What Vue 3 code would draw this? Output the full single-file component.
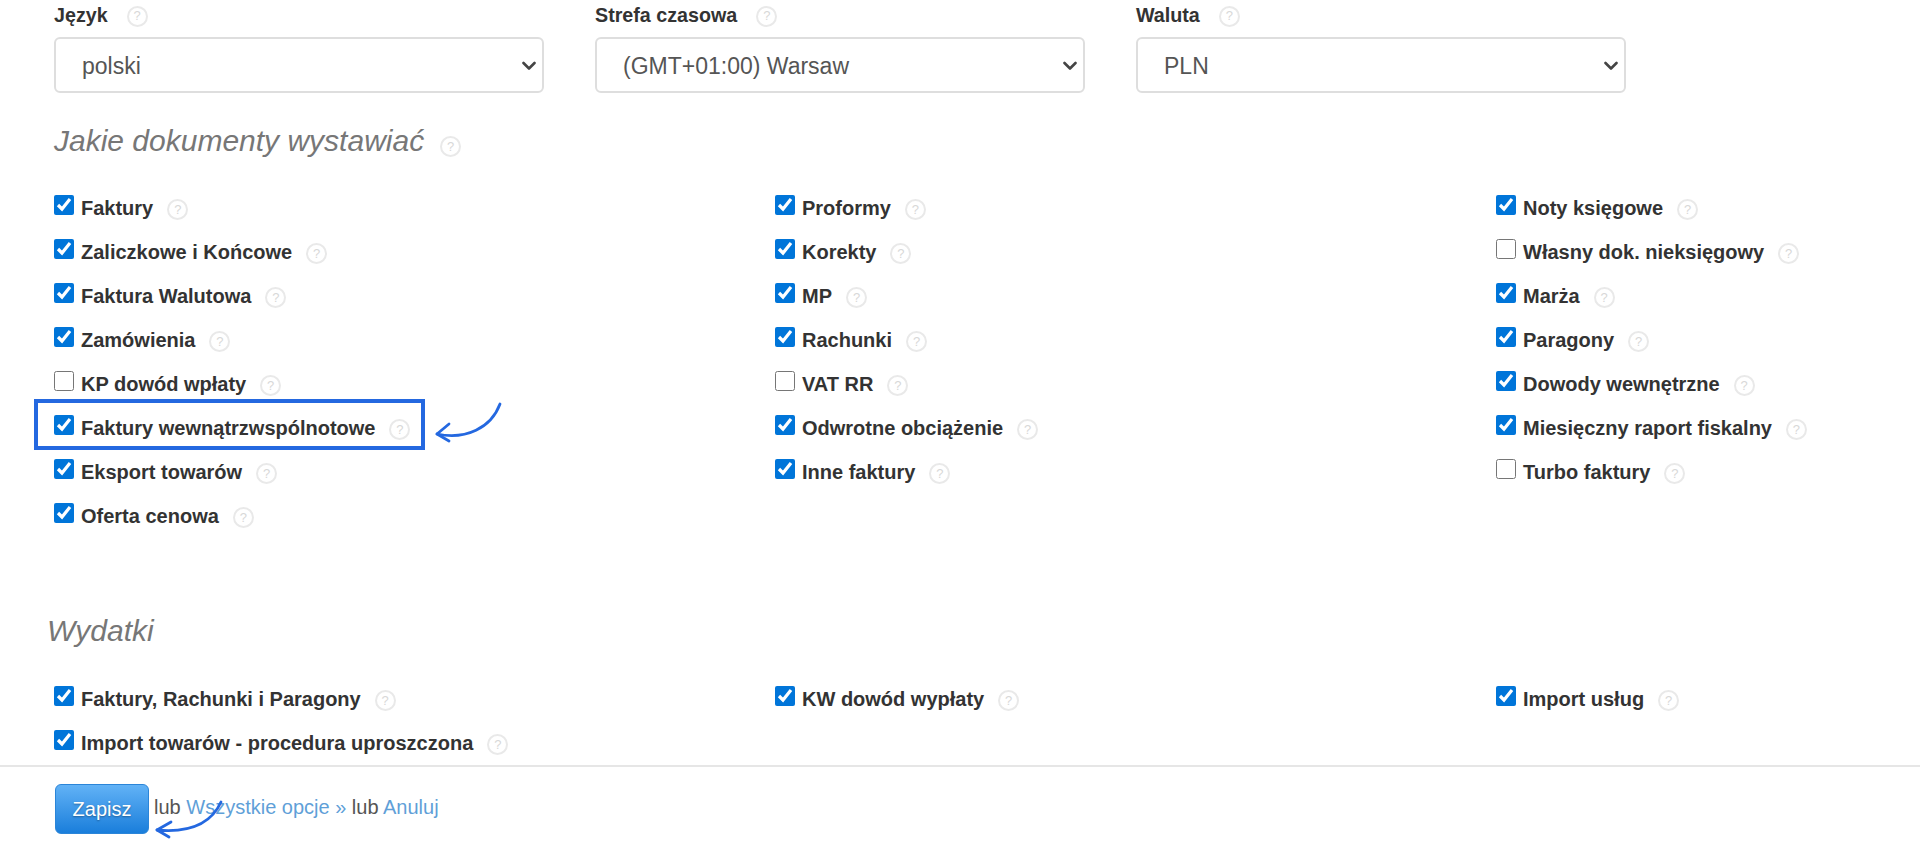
<script setup>
const selects = [
  { label: 'Język', value: 'polski' },
  { label: 'Strefa czasowa', value: '(GMT+01:00) Warsaw' },
  { label: 'Waluta', value: 'PLN' }
]
const docs = [
  [['Faktury', 1], ['Zaliczkowe i Końcowe', 1], ['Faktura Walutowa', 1], ['Zamówienia', 1], ['KP dowód wpłaty', 0], ['Faktury wewnątrzwspólnotowe', 1], ['Eksport towarów', 1], ['Oferta cenowa', 1]],
  [['Proformy', 1], ['Korekty', 1], ['MP', 1], ['Rachunki', 1], ['VAT RR', 0], ['Odwrotne obciążenie', 1], ['Inne faktury', 1]],
  [['Noty księgowe', 1], ['Własny dok. nieksięgowy', 0], ['Marża', 1], ['Paragony', 1], ['Dowody wewnętrzne', 1], ['Miesięczny raport fiskalny', 1], ['Turbo faktury', 0]]
]
const expenses = [
  [['Faktury, Rachunki i Paragony', 1], ['Import towarów - procedura uproszczona', 1]],
  [['KW dowód wypłaty', 1]],
  [['Import usług', 1]]
]
</script>

<template>
  <div class="page">
    <main class="content">
      <div class="selects">
        <div v-for="s in selects" :key="s.label" class="field">
          <div class="field-label">{{ s.label }}<span class="help">?</span></div>
          <div class="select-wrap">
            <select class="select">
              <option>{{ s.value }}</option>
            </select>
            <svg class="chevron" width="14" height="10" viewBox="0 0 14 10" fill="none" stroke="#444" stroke-width="2.6" stroke-linecap="round" stroke-linejoin="round">
              <path d="M1.5 2L7 7.5L12.5 2" />
            </svg>
          </div>
        </div>
      </div>

      <h2 class="heading">Jakie dokumenty wystawiać<span class="help">?</span></h2>
      <div class="columns">
        <div v-for="(col, i) in docs" :key="i" class="column">
          <label v-for="d in col" :key="d[0]" class="row">
            <input type="checkbox" class="check" :checked="!!d[1]" />
            <span class="row-text">{{ d[0] }}</span>
            <span class="help">?</span>
          </label>
        </div>
      </div>

      <h2 class="heading heading-exp">Wydatki</h2>
      <div class="columns columns-exp">
        <div v-for="(col, i) in expenses" :key="i" class="column">
          <label v-for="d in col" :key="d[0]" class="row">
            <input type="checkbox" class="check" :checked="!!d[1]" />
            <span class="row-text">{{ d[0] }}</span>
            <span class="help">?</span>
          </label>
        </div>
      </div>
    </main>

    <footer class="footer">
      <button class="save" type="button">Zapisz</button>
      <span class="actions">lub <a class="link">Wszystkie opcje »</a> lub <a class="link">Anuluj</a></span>
    </footer>

    <div class="highlight"></div>
    <svg class="arrows" width="1920" height="847" viewBox="0 0 1920 847" fill="none" stroke="#2468e0" stroke-width="2.8" stroke-linecap="round" stroke-linejoin="round">
      <path d="M500 404C491 428 466 440 437 434" />
      <path d="M449 424L437 434L449 441" />
      <path d="M221 802C211 824 190 833 157 830" />
      <path d="M171 822L157 830L169 837" />
    </svg>
  </div>
</template>

<style scoped>
.page {
  position: relative;
  height: 847px;
  width: 1920px;
  overflow: hidden;
  display: flex;
  flex-direction: column;
  background: #fff;
  font-family: "Liberation Sans", Arial, sans-serif;
  color: #333;
}
.content {
  flex: 1;
  min-height: 0;
  padding-left: 54px;
}
.selects {
  display: flex;
  gap: 51px;
}
.field {
  width: 490px;
}
.field-label {
  height: 37px;
  font-size: 19.7px;
  font-weight: 700;
  line-height: 30px;
  display: flex;
  align-items: center;
  padding-bottom: 8px;
  box-sizing: border-box;
}
.select-wrap {
  position: relative;
}
.select {
  display: block;
  width: 100%;
  height: 56px;
  box-sizing: border-box;
  padding: 2px 30px 0 26px;
  appearance: none;
  border: 2px solid #dedede;
  border-radius: 6px;
  background: #fff;
  font-family: inherit;
  font-size: 23px;
  color: #555;
}
.chevron {
  position: absolute;
  right: 8px;
  top: 24px;
  pointer-events: none;
}
.help {
  display: inline-flex;
  align-items: center;
  justify-content: center;
  width: 21px;
  height: 21px;
  margin-left: 14px;
  box-sizing: border-box;
  border: 2px solid #e9e9e9;
  border-radius: 50%;
  font-size: 13px;
  font-weight: 400;
  font-style: normal;
  color: #d8d8d8;
  flex: none;
  letter-spacing: 0;
}
.field-label .help {
  margin-left: 19px;
  margin-top: 3px;
}
.heading {
  margin: 28px 0 0;
  height: 40px;
  display: flex;
  align-items: center;
  font-size: 30px;
  font-weight: 400;
  font-style: italic;
  color: #777;
}
.heading .help {
  margin-top: 10px;
  margin-left: 16px;
}
.heading-exp {
  margin: 0 0 0 -7px;
  padding-top: 66px;
  height: 52px;
}
.columns {
  display: grid;
  grid-template-columns: 721px 721px 1fr;
  margin-top: 26px;
}
.columns-exp {
  margin-top: 21px;
}
.row {
  display: flex;
  align-items: center;
  height: 44px;
  font-size: 20px;
  font-weight: 700;
}
.check {
  width: 20px;
  height: 20px;
  margin: -9px 7px 0 0;
  accent-color: #0075d9;
  flex: none;
}
.row-text {
  white-space: nowrap;
  margin-top: -2px;
}
.footer {
  flex: none;
  height: 82px;
  box-sizing: border-box;
  border-top: 2px solid #e6e6e6;
  display: flex;
  align-items: flex-start;
  padding: 17px 0 0 55px;
  background: #fff;
}
.save {
  width: 94px;
  height: 50px;
  border: 1px solid #2b85d8;
  border-radius: 6px;
  background: linear-gradient(#62b2f6, #1a7edb);
  color: #fff;
  font-family: inherit;
  font-size: 20px;
  text-shadow: 0 1px 2px rgba(0, 0, 0, 0.35);
  padding: 0;
}
.actions {
  margin-left: 5px;
  font-size: 20px;
  line-height: 46px;
  color: #555;
}
.link {
  color: #5f9fd8;
}
.highlight {
  position: absolute;
  left: 34px;
  top: 399px;
  width: 391px;
  height: 51px;
  box-sizing: border-box;
  border: 4px solid #2468e0;
}
.arrows {
  position: absolute;
  left: 0;
  top: 0;
  pointer-events: none;
}
</style>
